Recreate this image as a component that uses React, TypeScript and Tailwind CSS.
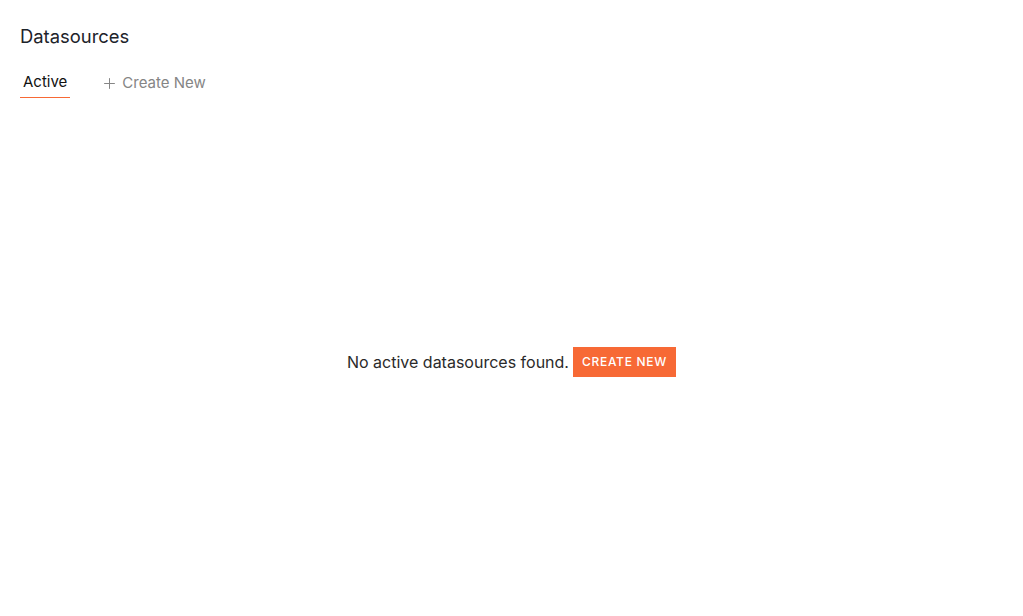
import { Plus } from "lucide-react";

export default function App() {
  return (
    <div className="flex h-screen flex-col bg-white px-5 font-['Inter',sans-serif] text-[#1f2328]">
      {/* Header */}
      <h1 className="pt-[24px] text-[18.4px] leading-[24px] text-[#1d232a]">Datasources</h1>

      {/* Tabs */}
      <div className="mt-[24px] flex items-end gap-[31px]">
        <button className="border-b border-[#f76935] px-[3px] pb-[5px] text-[15px] leading-[20px] text-[#111]">
          Active
        </button>
        <button className="flex items-center gap-[4px] pb-[5px] text-[15px] leading-[20px] text-[#858585]">
          <Plus className="h-[17px] w-[17px]" strokeWidth={1.4} />
          Create New
        </button>
      </div>

      {/* Empty state */}
      <div className="flex flex-1 items-center justify-center gap-[4px] pt-[10px]">
        <span className="text-[16px] text-[#2a2a2a]">No active datasources found.</span>
        <button className="h-[30px] bg-[#f76935] px-[9px] text-[12px] font-medium tracking-[0.06em] text-white">
          CREATE NEW
        </button>
      </div>
    </div>
  );
}
